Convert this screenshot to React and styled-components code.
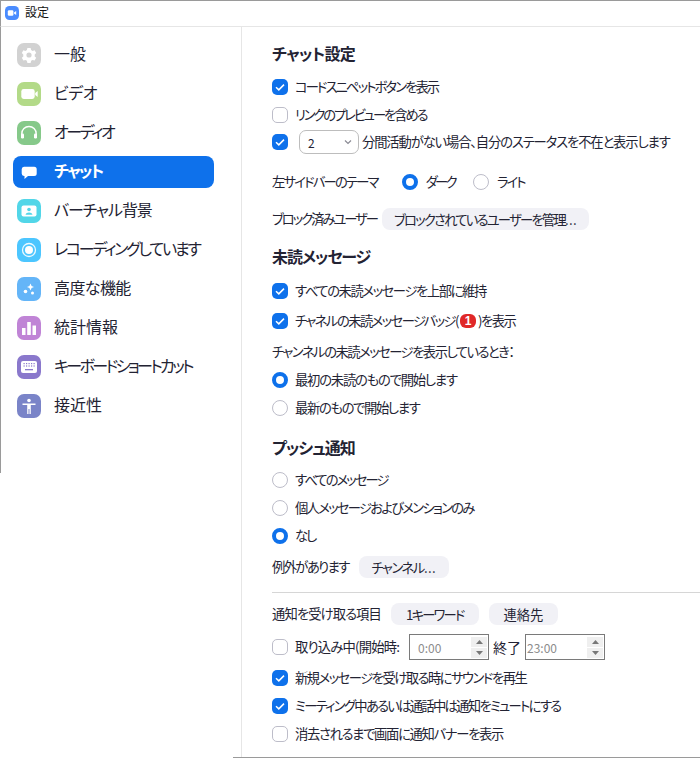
import styled, { createGlobalStyle } from 'styled-components';

const GlobalStyle = createGlobalStyle`
  html, body {
    margin: 0;
    padding: 0;
    background: #fff;
  }
  body {
    font-family: "Noto Sans CJK JP", "Noto Sans", sans-serif;
    font-feature-settings: "palt";
    color: #232333;
  }
`;

const GearIcon = () => (
  <svg width="24" height="24" viewBox="0 0 24 24">
    <path
      fill="#fff"
      fillRule="evenodd"
      d="M10.4 5h3.2l.5 2 1.5.9 2-.6 1.6 2.8-1.5 1.4v1.9l1.5 1.3-1.6 2.8-2-.6-1.5.9-.5 2.2h-3.2l-.5-2.2-1.5-.9-2 .6-1.6-2.8 1.5-1.3v-1.9L4.8 10.1l1.6-2.8 2 .6 1.5-.9zM12 9.4a2.6 2.6 0 1 0 0 5.2 2.6 2.6 0 0 0 0-5.2z"
    />
  </svg>
);

const VideoIcon = () => (
  <svg width="24" height="24" viewBox="0 0 24 24">
    <rect x="4.3" y="7" width="13.4" height="10" rx="2.4" fill="#fff" />
    <path d="M18.2 11l2.5-2v6l-2.500-2z" fill="#fff" />
  </svg>
);

const HeadphoneIcon = () => (
  <svg width="24" height="24" viewBox="0 0 24 24">
    <path d="M4.8 14v-1.300a7.200 7.200 0 0 1 14.400 0V14" fill="none" stroke="#fff" strokeWidth="1.400" />
    <rect x="4" y="12.500" width="3" height="5" rx="1.200" fill="#fff" />
    <rect x="17" y="12.500" width="3" height="5" rx="1.200" fill="#fff" />
  </svg>
);

const ChatIcon = () => (
  <svg width="24" height="24" viewBox="0 0 24 24">
    <path
      d="M7 6.700h10.200a2.500 2.500 0 0 1 2.500 2.500v4.300a2.500 2.500 0 0 1-2.500 2.500H11l-3.500 3v-3H7a2.500 2.500 0 0 1-2.300-2.500V9.200A2.500 2.500 0 0 1 7 6.700z"
      fill="#fff"
    />
  </svg>
);

const BackgroundIcon = () => (
  <svg width="24" height="24" viewBox="0 0 24 24">
    <rect x="4.500" y="6.500" width="15" height="11" rx="2" fill="#fff" />
    <circle cx="12" cy="10.500" r="1.800" fill="#52d6e8" />
    <path d="M8.500 15.800c.4-1.700 1.800-2.400 3.500-2.400s3.100.7 3.500 2.400z" fill="#52d6e8" />
  </svg>
);

const RecordIcon = () => (
  <svg width="24" height="24" viewBox="0 0 24 24">
    <circle cx="12" cy="12" r="6.500" fill="none" stroke="#fff" strokeWidth="1.300" opacity="0.9" />
    <circle cx="12" cy="12" r="4" fill="#fff" />
  </svg>
);

const SparkleIcon = () => (
  <svg width="24" height="24" viewBox="0 0 24 24">
    <path d="M13.500 6.500l1.100 2.400 2.400 1.100-2.400 1.100-1.100 2.400-1.100-2.400L10 10l2.400-1.100z" fill="#fff" />
    <circle cx="8.500" cy="14.500" r="1.800" fill="#fff" />
    <circle cx="15.500" cy="16" r="1.500" fill="#fff" />
  </svg>
);

const BarsIcon = () => (
  <svg width="24" height="24" viewBox="0 0 24 24">
    <rect x="5" y="12" width="3.500" height="7" fill="#fff" />
    <rect x="10.200" y="6" width="3.600" height="13" rx="0.500" fill="#fff" />
    <rect x="15.500" y="9.500" width="3.500" height="9.500" fill="#fff" />
  </svg>
);

const KeyboardIcon = () => (
  <svg width="24" height="24" viewBox="0 0 24 24">
    <rect x="4" y="6" width="16" height="12" rx="2" fill="#fff" />
    <g fill="#8a78cc">
      {[6.500, 9, 11.500, 14, 16.500].map((x) => (
        <g key={x}>
          <rect x={x} y="8" width="1.200" height="1.200" />
          <rect x={x} y="10.400" width="1.200" height="1.200" />
        </g>
      ))}
      <rect x="8" y="14" width="8" height="1.300" />
    </g>
  </svg>
);

const AccessIcon = () => (
  <svg width="24" height="24" viewBox="0 0 24 24">
    <circle cx="12" cy="6.500" r="1.800" fill="#fff" />
    <path d="M5.500 9.500h13v1.400h-4.700V20h-1.300v-5h-1v5h-1.300v-9.100H5.500z" fill="#fff" />
  </svg>
);

const MiniCamera = () => (
  <svg width="14" height="14" viewBox="0 0 14 14">
    <rect width="14" height="14" rx="4.500" fill="#4a8cff" />
    <rect x="2.800" y="4.300" width="5.600" height="5.400" rx="1.200" fill="#fff" />
    <path d="M9 6.500l2.200-1.500v4L9 7.500z" fill="#fff" />
  </svg>
);

const Tick = () => (
  <svg width="16" height="16" viewBox="0 0 16 16">
    <path d="M4 8.300l2.800 2.600L12 5.600" fill="none" stroke="#fff" strokeWidth="1.500" />
  </svg>
);

const SpinUp = () => (
  <svg width="7" height="4" viewBox="0 0 7 4"><path d="M3.500 0l3.500 4H0z" fill="#777" /></svg>
);

const SpinDown = () => (
  <svg width="7" height="4" viewBox="0 0 7 4"><path d="M0 0h7L3.500 4z" fill="#777" /></svg>
);

// ls: the reference font has narrow kana, so each label gets its own tracking
const navItems = [
  { label: '一般', bg: '#d2d2d2', Icon: GearIcon, ls: 0 },
  { label: 'ビデオ', bg: '#b3da88', Icon: VideoIcon, ls: -0.4 },
  { label: 'オーディオ', bg: '#86c98a', Icon: HeadphoneIcon, ls: -2.4 },
  { label: 'チャット', Icon: ChatIcon, active: true, ls: -1.75 },
  { label: 'バーチャル背景', bg: '#52d6e8', Icon: BackgroundIcon, ls: -1.1 },
  { label: 'レコーディングしています', bg: '#4cc6ff', Icon: RecordIcon, ls: -2.2 },
  { label: '高度な機能', bg: '#64b5f8', Icon: SparkleIcon, ls: -0.6 },
  { label: '統計情報', bg: '#c084d6', Icon: BarsIcon, ls: 0 },
  { label: 'キーボードショートカット', bg: '#8a78cc', Icon: KeyboardIcon, ls: -2.6 },
  { label: '接近性', bg: '#7a84c8', Icon: AccessIcon, ls: 0 },
];

export default function App() {
  return (
    <Window>
      <GlobalStyle />
      <TitleBar>
        <MiniCamera />
        <TitleText>設定</TitleText>
      </TitleBar>
      <Body>
        <Sidebar>
          <Nav>
            {navItems.map(({ label, bg, Icon, active, ls }) => (
              <NavItem key={label} $active={active}>
                <IconTile $bg={bg} $active={active}>
                  <Icon />
                </IconTile>
                <NavLabel $active={active} $ls={ls}>{label}</NavLabel>
              </NavItem>
            ))}
          </Nav>
        </Sidebar>
        <Pane>
          <Content>
            <Heading $ls={-0.7}>チャット設定</Heading>
            <Row $mt={6}>
              <CheckBox $on><Tick /></CheckBox>
              <Label $ls={-1.9}>コードスニペットボタンを表示</Label>
            </Row>
            <Row>
              <CheckBox />
              <Label $ls={-2.1}>リンクのプレビューを含める</Label>
            </Row>
            <Row $h={26}>
              <CheckBox $on><Tick /></CheckBox>
              <SelectBox>
                <span>2</span>
                <svg width="8" height="6" viewBox="0 0 8 6">
                  <path d="M1 1.500l3 3 3-3" fill="none" stroke="#8a8a94" strokeWidth="1.200" />
                </svg>
              </SelectBox>
              <Text $ls={-1.12}>分間活動がない場合、自分のステータスを不在と表示します</Text>
            </Row>
            <Row $mt={13}>
              <Text $ls={-1.8}>左サイドバーのテーマ</Text>
              <ThemeOption $ml={24}>
                <Radio $on />
                <Text $ls={-2.6}>ダーク</Text>
              </ThemeOption>
              <ThemeOption $ml={18}>
                <Radio />
                <Text $ls={-2}>ライト</Text>
              </ThemeOption>
            </Row>
            <Row $mt={9}>
              <Text $ls={-2}>ブロック済みユーザー</Text>
              <PillButton $w={207} $ml={5} $ls={-1.75}>
                ブロックされているユーザーを管理<Dots>...</Dots>
              </PillButton>
            </Row>

            <Heading $mt={13} $ls={-1.1}>未読メッセージ</Heading>
            <Row $mt={7}>
              <CheckBox $on><Tick /></CheckBox>
              <Label $ls={-1.4}>すべての未読メッセージを上部に維持</Label>
            </Row>
            <Row $mt={2}>
              <CheckBox $on><Tick /></CheckBox>
              <Label $ls={-1.55}>
                チャネルの未読メッセージバッジ(<Badge>1</Badge>)を表示
              </Label>
            </Row>
            <Row $mt={3}>
              <Text $ls={-1.5}>チャンネルの未読メッセージを表示しているとき：</Text>
            </Row>
            <Row>
              <Radio $on />
              <Label $ls={-1.2}>最初の未読のもので開始します</Label>
            </Row>
            <Row>
              <Radio />
              <Label $ls={-1.35}>最新のもので開始します</Label>
            </Row>

            <Heading $mt={15} $ls={-1}>プッシュ通知</Heading>
            <Row $mt={5}>
              <Radio />
              <Label $ls={-1.9}>すべてのメッセージ</Label>
            </Row>
            <Row>
              <Radio />
              <Label $ls={-1.7}>個人メッセージおよびメンションのみ</Label>
            </Row>
            <Row>
              <Radio $on />
              <Label $ls={-2}>なし</Label>
            </Row>
            <Row $mt={3}>
              <Text $ls={-1.6}>例外があります</Text>
              <PillButton $w={90} $ml={10} $ls={-1.4}>
                チャンネル<Dots>...</Dots>
              </PillButton>
            </Row>
            <Divider />
            <Row $mt={7}>
              <Text $ls={-0.9}>通知を受け取る項目</Text>
              <PillButton $w={88} $ml={10} $ls={-1.8}>1キーワード</PillButton>
              <PillButton $w={69} $ml={10}>連絡先</PillButton>
            </Row>
            <Row $mt={5}>
              <CheckBox />
              <Label $ls={-0.8}>取り込み中(開始時:</Label>
              <TimeField $ml={10} $pl={8}>
                <span>0:00</span>
                <Spinner>
                  <SpinButton><SpinUp /></SpinButton>
                  <SpinButton><SpinDown /></SpinButton>
                </Spinner>
              </TimeField>
              <EndLabel>終了</EndLabel>
              <TimeField $pl={1}>
                <span>23:00</span>
                <Spinner>
                  <SpinButton><SpinUp /></SpinButton>
                  <SpinButton><SpinDown /></SpinButton>
                </Spinner>
              </TimeField>
            </Row>
            <Row $mt={3}>
              <CheckBox $on><Tick /></CheckBox>
              <Label $ls={-1.5}>新規メッセージを受け取る時にサウンドを再生</Label>
            </Row>
            <Row>
              <CheckBox $on><Tick /></CheckBox>
              <Label $ls={-1.7}>ミーティング中あるいは通話中は通知をミュートにする</Label>
            </Row>
            <Row>
              <CheckBox />
              <Label $ls={-1.3}>消去されるまで画面に通知バナーを表示</Label>
            </Row>
          </Content>
        </Pane>
      </Body>
    </Window>
  );
}

const Window = styled.div`
  width: 700px;
  height: 758px;
  display: flex;
  flex-direction: column;
  overflow: hidden;
`;

const TitleBar = styled.div`
  height: 27px;
  flex: none;
  display: flex;
  align-items: center;
  gap: 6px;
  padding: 0 0 1px 4px;
  box-sizing: border-box;
  border-top: 1px solid #9a9a9a;
  border-left: 1px solid #9a9a9a;
  border-bottom: 1px solid #e6e6e6;
`;

const TitleText = styled.span`
  font-size: 12px;
  line-height: 14px;
  padding-bottom: 2px;
  color: #111;
`;

const Body = styled.div`
  flex: 1;
  display: flex;
  min-height: 0;
`;

const Sidebar = styled.div`
  width: 233px;
  flex: none;
`;

const Nav = styled.nav`
  height: 446px;
  width: 241px;
  box-sizing: border-box;
  border-left: 1px solid #9a9a9a;
  padding: 12px 0 0 12px;
  display: flex;
  flex-direction: column;
  gap: 7px;
`;

const NavItem = styled.div`
  width: 201px;
  height: 32px;
  display: flex;
  align-items: center;
  padding-left: 4px;
  box-sizing: border-box;
  border-radius: 8px;
  background: ${(p) => (p.$active ? '#0e71eb' : 'transparent')};
`;

const IconTile = styled.div`
  width: 24px;
  height: 24px;
  flex: none;
  border-radius: 7px;
  background: ${(p) => p.$bg || 'transparent'};
`;

const NavLabel = styled.span`
  margin-left: 13px;
  padding-bottom: 5px;
  font-size: 16px;
  letter-spacing: ${(p) => p.$ls || 0}px;
  color: ${(p) => (p.$active ? '#fff' : '#232333')};
  font-weight: ${(p) => (p.$active ? 700 : 400)};
  white-space: nowrap;
`;

const Pane = styled.div`
  flex: 1;
  padding-left: 8px;
  border-bottom: 1px solid #9a9a9a;
  min-width: 0;
`;

const Content = styled.div`
  height: 100%;
  box-sizing: border-box;
  border-left: 1px solid #e6e6e6;
  padding: 16px 0 0 30px;
`;

const Heading = styled.h2`
  margin: ${(p) => p.$mt || 0}px 0 0;
  height: 24px;
  line-height: 21px;
  font-size: 16px;
  font-weight: 700;
  letter-spacing: ${(p) => p.$ls || 0}px;
  color: #232333;
`;

const Row = styled.div`
  height: ${(p) => p.$h || 28}px;
  margin-top: ${(p) => p.$mt || 0}px;
  display: flex;
  align-items: center;
  font-size: 13.3px;
  white-space: nowrap;
`;

const Text = styled.span`
  line-height: 20px;
  letter-spacing: ${(p) => p.$ls || 0}px;
`;

const Label = styled(Text)`
  margin-left: 7px;
  display: inline-flex;
  align-items: center;
`;

const CheckBox = styled.span`
  width: 16px;
  height: 16px;
  flex: none;
  box-sizing: border-box;
  border-radius: 5px;
  border: ${(p) => (p.$on ? 'none' : '1px solid #bdbdc9')};
  background: ${(p) => (p.$on ? '#0e71eb' : '#fff')};
  display: flex;
`;

const Radio = styled.span`
  width: 16px;
  height: 16px;
  flex: none;
  box-sizing: border-box;
  border-radius: 50%;
  background: #fff;
  border: ${(p) => (p.$on ? '4.5px solid #0e71eb' : '1px solid #bdbdc9')};
`;

const ThemeOption = styled.span`
  display: flex;
  align-items: center;
  gap: 8px;
  margin-left: ${(p) => p.$ml}px;
`;

const SelectBox = styled.span`
  width: 60px;
  height: 24px;
  margin: 0 3px 0 11px;
  padding: 0 6px 0 8px;
  box-sizing: border-box;
  display: flex;
  align-items: center;
  justify-content: space-between;
  border: 1px solid #bdbdbd;
  border-radius: 7px;
  font-size: 12px;
`;

const PillButton = styled.span`
  width: ${(p) => p.$w}px;
  height: 22px;
  margin-left: ${(p) => p.$ml}px;
  border-radius: 8px;
  background: #f1f1f6;
  display: flex;
  align-items: center;
  justify-content: center;
  font-size: 13.3px;
  letter-spacing: ${(p) => p.$ls || 0}px;
`;

const Dots = styled.span`
  letter-spacing: 0.3px;
`;

const Badge = styled.span`
  width: 16px;
  height: 14px;
  margin: 0 2px;
  border-radius: 6px;
  background: #e02828;
  color: #fff;
  font-size: 12px;
  font-weight: 700;
  line-height: 14px;
  letter-spacing: 0;
  text-align: center;
  font-family: "Liberation Sans", sans-serif;
`;

const Divider = styled.hr`
  margin: 11px 0 0;
  border: none;
  height: 1px;
  background: #d6d6d6;
`;

const TimeField = styled.span`
  width: 80px;
  height: 26px;
  box-sizing: border-box;
  margin-left: ${(p) => p.$ml || 0}px;
  padding: 0 1px 0 ${(p) => p.$pl}px;
  border: 1px solid #7a7a7a;
  display: flex;
  align-items: center;
  justify-content: space-between;
  font-size: 12px;
  color: #8c8c8c;
`;

const Spinner = styled.span`
  width: 16px;
  display: flex;
  flex-direction: column;
  gap: 1px;
`;

const SpinButton = styled.span`
  height: 10px;
  background: #efefef;
  display: flex;
  align-items: center;
  justify-content: center;
`;

const EndLabel = styled.span`
  width: 36px;
  text-align: center;
  font-size: 14px;
`;
